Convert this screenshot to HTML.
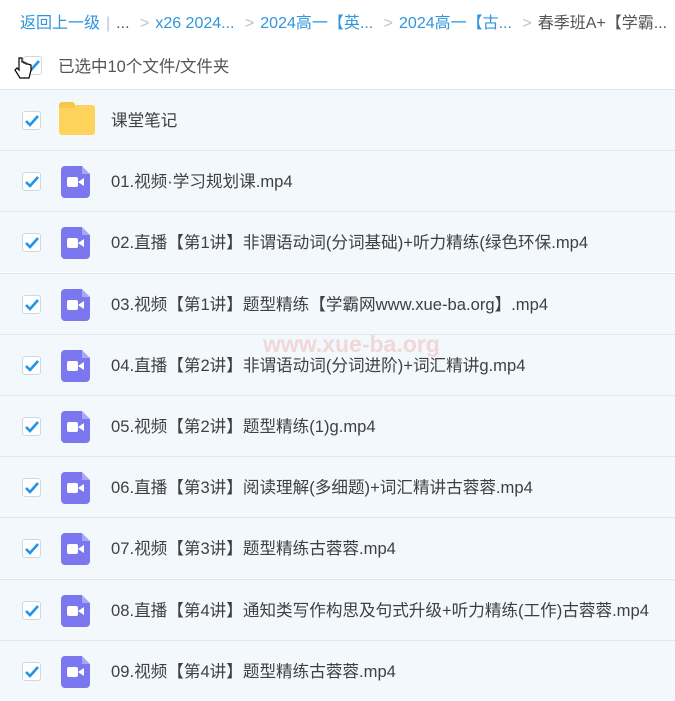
<!DOCTYPE html>
<html><head><meta charset="utf-8"><style>
body{margin:0;width:675px;height:694px;overflow:hidden;background:#fff;font-family:"Liberation Sans","Noto Sans CJK SC",sans-serif;}
.bc{position:absolute;top:9px;left:20px;white-space:nowrap;font-size:16px;color:#2f95dd;}
.bc .g{color:#b8c4cf;margin:0 6px;}
.bc .d{color:#555;}
.sel{position:absolute;top:53px;left:22px;font-size:16.5px;color:#555;}
.cb{position:absolute;width:17px;height:17px;border:1px solid #cfd8e0;border-radius:3px;background:#fff;}
.cb svg{position:absolute;left:1px;top:2px}
.row{position:absolute;left:0;width:675px;height:61px;background:#f3f8fd;border-top:1px solid #dbe7f2;box-sizing:border-box;}
.row .t{position:absolute;left:111px;top:17px;font-size:16.6px;color:#404040;white-space:nowrap;}
.vid{position:absolute;left:61px;top:15px;width:29px;height:32px;background:#7b78ef;border-radius:4px;}
.vid:after{content:"";position:absolute;right:0;top:0;border-style:solid;border-width:0 8px 8px 0;border-color:#f3f8fd #f3f8fd #a9a6f6 #a9a6f6;}
.cam{position:absolute;left:6px;top:11px;width:11px;height:10px;background:#fff;border-radius:2px}
.cam2{position:absolute;left:17px;top:12px;border-style:solid;border-width:4px 6px 4px 0;border-color:transparent #fff transparent transparent}
.wm{position:absolute;left:263px;top:331px;font:bold 23px "Liberation Sans",sans-serif;color:rgba(240,140,130,.3);}
</style></head><body>
<div class="bc">返回上一级<span class="g">|</span><span class="d">...</span><span class="g"> &gt;</span>x26 2024...<span class="g"> &gt;</span>2024高一【英...<span class="g"> &gt;</span>2024高一【古...<span class="g"> &gt;</span><span class="d">春季班A+【学霸...</span></div>
<div class="cb" style="left:23px;top:56px"><svg width="15" height="13" viewBox="0 0 15 13"><path d="M2 7l4 4 8-9" stroke="#1f95e8" stroke-width="2.6" fill="none"/></svg></div>
<div class="sel" style="left:58px">已选中10个文件/文件夹</div>
<svg style="position:absolute;left:13px;top:56px" width="20" height="26" viewBox="0 0 20 26"><path d="M6 2v12l-2-2-2 2 5 8h9l2-8v-5l-3-1-2 0v-1l-2 0v-1l-2 0V2z" fill="#fff" stroke="#000" stroke-width="1.2"/></svg>
<div id="rows"></div>
<div class="wm">www.xue-ba.org</div>
<script>
var items=["课堂笔记","01.视频·学习规划课.mp4","02.直播【第1讲】非谓语动词(分词基础)+听力精练(绿色环保.mp4","03.视频【第1讲】题型精练【学霸网www.xue-ba.org】.mp4","04.直播【第2讲】非谓语动词(分词进阶)+词汇精讲g.mp4","05.视频【第2讲】题型精练(1)g.mp4","06.直播【第3讲】阅读理解(多细题)+词汇精讲古蓉蓉.mp4","07.视频【第3讲】题型精练古蓉蓉.mp4","08.直播【第4讲】通知类写作构思及句式升级+听力精练(工作)古蓉蓉.mp4","09.视频【第4讲】题型精练古蓉蓉.mp4"];
var h="";items.forEach(function(s,i){var top=89+i*61.2;
var icon=i==0?'<div style="position:absolute;left:59px;top:15px;width:36px;height:30px;background:#fdd35c;border-radius:3px"></div><div style="position:absolute;left:59px;top:12px;width:16px;height:6px;background:#f5c84c;border-radius:3px 3px 0 0"></div>':'<div class="vid"><div class="cam"></div><div class="cam2"></div></div>';
h+='<div class="row" style="top:'+top+'px"><div class="cb" style="left:22px;top:21px"><svg width="15" height="13" viewBox="0 0 15 13"><path d="M2 7l4 4 8-9" stroke="#1f95e8" stroke-width="2.6" fill="none"/></svg></div>'+icon+'<div class="t">'+s+'</div></div>';});
document.getElementById("rows").innerHTML=h;
</script>
</body></html>
